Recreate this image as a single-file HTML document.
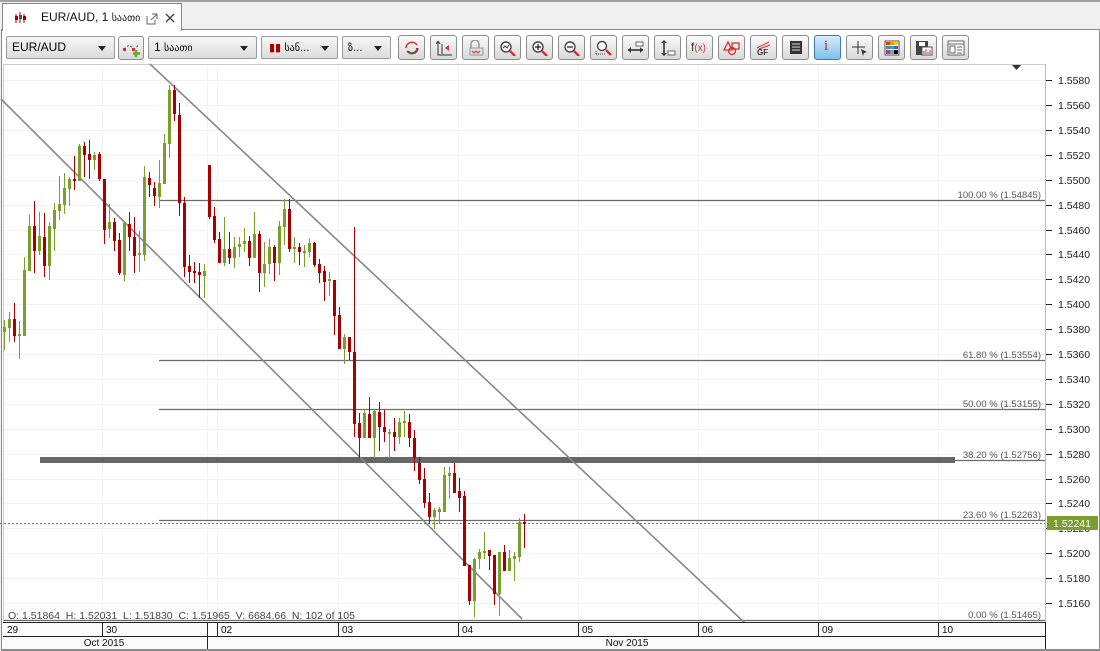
<!DOCTYPE html>
<html><head><meta charset="utf-8"><style>
*{margin:0;padding:0;box-sizing:border-box}
body{width:1100px;height:651px;background:#f0f0f0;font-family:"Liberation Sans","DejaVu Sans",sans-serif;position:relative;overflow:hidden}
.frame{position:absolute;left:1px;top:29px;width:1099px;height:622px;background:#fff;border:1px solid #8a8a8a;border-bottom:2px solid #8a8a8a}
.topline{position:absolute;left:0;top:0;width:1100px;height:2px;background:#a0a0a0}
.tab{position:absolute;left:2px;top:3px;width:180px;height:28px;background:#fff;border:1px solid #8a8a8a;border-bottom:none;font-size:12px;color:#111}
.dd{position:absolute;top:36px;height:23px;border:1px solid #9a9a9a;border-radius:2px;background:linear-gradient(#f6f6f6,#dcdcdc);font-size:12px;line-height:21px;padding-left:5px;color:#000}
.dd:after{content:"";position:absolute;right:8px;top:9px;border-left:4px solid transparent;border-right:4px solid transparent;border-top:5px solid #222}
.btn{position:absolute;top:35px;width:27px;height:25px;border:1px solid #8e8e8e;border-radius:3px;background:linear-gradient(#fafafa,#d8d8d8)}
.btn svg{position:absolute;left:4px;top:4px}
.blue{background:linear-gradient(#d8ecfa,#7cc0ec);border-color:#3a7db0}
</style></head><body>
<div class="topline"></div>
<div class="frame"></div>
<div class="tab">
<svg style="position:absolute;left:11px;top:8px" width="14" height="12"><path d="M2 2v9M6 0v11M10 2v9" stroke="#a00" stroke-width="1"/><rect x="1" y="4" width="3" height="4" fill="#a00"/><rect x="9" y="4" width="3" height="4" fill="#a00"/><rect x="5" y="3" width="3" height="4" fill="#555"/></svg>
<span style="position:absolute;left:38px;top:6px">EUR/AUD, 1 <span style="font-family:'DejaVu Sans',sans-serif;font-size:10px">საათი</span></span>
<svg style="position:absolute;left:143px;top:9px" width="12" height="12"><path d="M1 3v8h8V7M6 1h5v5M11 1L5 7" stroke="#666" fill="none"/></svg>
<svg style="position:absolute;left:162px;top:9px" width="10" height="10"><path d="M1 1l8 8M9 1l-8 8" stroke="#444" stroke-width="1.4"/></svg>
</div>
<div class="dd" style="left:6px;width:109px">EUR/AUD</div>
<div class="btn" style="left:118px;top:36px;width:26px;height:24px"><svg width="18" height="16"><path d="M1 8l5-4 5 4 5-4" stroke="#555" fill="none" stroke-dasharray="2 2"/><rect x="0" y="7" width="3" height="3" fill="#c33"/><rect x="9" y="7" width="3" height="3" fill="#c33"/><path d="M13 9v7M10 12.5h7" stroke="#6a2" stroke-width="2.5"/></svg></div>
<div class="dd" style="left:148px;width:109px">1 <span style="font-family:'DejaVu Sans',sans-serif;font-size:10px">საათი</span></div>
<div class="dd" style="left:261px;width:77px;padding-left:7px"><span style="color:#a00;font-size:11px">▮▮</span> <span style="font-family:'DejaVu Sans',sans-serif;font-size:10px">სან...</span></div>
<div class="dd" style="left:342px;width:49px"><span style="font-family:'DejaVu Sans',sans-serif;font-size:10px">ზ...</span></div>
<div class="btn" style="left:398px"><svg width="18" height="16"><path d="M3 8a6 6 0 0 1 11-3M15 8a6 6 0 0 1-11 3" stroke="#c33" stroke-width="1.6" fill="none"/><path d="M14 8a5 5 0 0 1-9 3" stroke="#555" stroke-width="1.6" fill="none"/></svg></div>
<div class="btn" style="left:430px"><svg width="18" height="16"><path d="M3 1v14h14M3 1l-2 3M3 1l2 3M7 4v10" stroke="#333" fill="none"/><path d="M14 5l-4 3 4 3z" fill="#c33"/></svg></div>
<div class="btn" style="left:462px"><svg width="18" height="16"><path d="M4 8V4a4 4 0 0 1 8 0v4" stroke="#999" fill="none" stroke-width="1.5"/><rect x="3" y="8" width="13" height="7" fill="#ddd" stroke="#999"/><path d="M5 11l2 2 2-2 2 2 2-2" stroke="#c33" fill="none"/></svg></div>
<div class="btn" style="left:494px"><svg width="18" height="16"><circle cx="7" cy="7" r="5" stroke="#444" fill="#fff" stroke-width="1.4"/><path d="M4 8l2-2 2 2 2-3" stroke="#333" fill="none"/><path d="M11 11l5 5" stroke="#c33" stroke-width="2.4"/></svg></div>
<div class="btn" style="left:526px"><svg width="18" height="16"><circle cx="7" cy="7" r="5" stroke="#444" fill="#fff" stroke-width="1.4"/><path d="M4 7h6M7 4v6" stroke="#333" stroke-width="1.4"/><path d="M11 11l5 5" stroke="#c33" stroke-width="2.4"/></svg></div>
<div class="btn" style="left:558px"><svg width="18" height="16"><circle cx="7" cy="7" r="5" stroke="#444" fill="#fff" stroke-width="1.4"/><path d="M4 7h6" stroke="#333" stroke-width="1.4"/><path d="M11 11l5 5" stroke="#c33" stroke-width="2.4"/></svg></div>
<div class="btn" style="left:590px"><svg width="18" height="16"><circle cx="7" cy="6" r="4.5" stroke="#444" fill="#fff" stroke-width="1.4"/><path d="M1 14h9M1 11v4" stroke="#444" stroke-dasharray="1 1"/><path d="M11 10l5 5" stroke="#c33" stroke-width="2.4"/></svg></div>
<div class="btn" style="left:622px"><svg width="18" height="16"><rect x="9" y="2" width="7" height="4" fill="#fff" stroke="#666"/><path d="M1 10h15" stroke="#333" stroke-width="1.6"/><path d="M1 10l3-3v6zM16 10l-3-3v6z" fill="#333"/></svg></div>
<div class="btn" style="left:654px"><svg width="18" height="16"><rect x="9" y="11" width="7" height="4" fill="#fff" stroke="#666"/><path d="M5 1v14" stroke="#333" stroke-width="1.6"/><path d="M5 0l-3 3h6zM5 16l-3-3h6z" fill="#333"/></svg></div>
<div class="btn" style="left:686px"><span style="position:absolute;left:4px;top:4px;font-size:12px;color:#333">f<span style="color:#c33;font-size:10px">(x)</span></span></div>
<div class="btn" style="left:718px"><svg width="18" height="16"><path d="M5 2l-4 8h8z" stroke="#c33" fill="none" stroke-width="1.3"/><rect x="9" y="3" width="7" height="6" stroke="#c33" fill="none" stroke-width="1.3"/><circle cx="9" cy="11" r="3.5" stroke="#c33" fill="none" stroke-width="1.3"/></svg></div>
<div class="btn" style="left:750px"><svg width="18" height="16"><path d="M2 8l12-6M4 9l11-4" stroke="#c33"/><text x="2" y="15" font-size="8" font-family="Liberation Sans" font-weight="bold" fill="#333">GF</text></svg></div>
<div class="btn" style="left:782px"><svg width="18" height="16"><rect x="3" y="1" width="12" height="13" fill="#333"/><path d="M5 4h8M5 7h8M5 10h8" stroke="#ddd"/></svg></div>
<div class="btn blue" style="left:814px"><span style="position:absolute;left:9px;top:2px;font-size:15px;color:#c22;font-family:'Liberation Serif',serif">i</span></div>
<div class="btn" style="left:846px"><svg width="18" height="16"><path d="M7 1v13M1 7h13" stroke="#333"/><path d="M10 9l6 3-3 1-1 3z" fill="#333"/></svg></div>
<div class="btn" style="left:878px"><svg width="18" height="16"><rect x="2" y="1" width="14" height="14" fill="#fff" stroke="#555"/><rect x="3" y="2" width="4" height="3" fill="#e33"/><rect x="7" y="2" width="4" height="3" fill="#f90"/><rect x="11" y="2" width="4" height="3" fill="#fc0"/><rect x="3" y="6" width="4" height="3" fill="#3a3"/><rect x="7" y="6" width="4" height="3" fill="#39f"/><rect x="11" y="6" width="4" height="3" fill="#36c"/><rect x="3" y="10" width="4" height="4" fill="#a3c"/><rect x="7" y="10" width="4" height="4" fill="#999"/><rect x="11" y="10" width="4" height="4" fill="#000"/></svg></div>
<div class="btn" style="left:910px"><svg width="18" height="16"><rect x="1" y="1" width="12" height="14" fill="#444"/><rect x="4" y="2" width="6" height="4" fill="#fff"/><rect x="7" y="7" width="10" height="8" fill="#fff" stroke="#555"/><path d="M9 14v-3M11 14v-5M13 14v-2M15 14v-4" stroke="#c33"/></svg></div>
<div class="btn" style="left:942px"><svg width="18" height="16"><rect x="1" y="1" width="16" height="14" fill="#fff" stroke="#666"/><path d="M1 4h16" stroke="#666"/><rect x="3" y="6" width="5" height="7" fill="none" stroke="#666"/><path d="M10 7h5M10 10h5M10 13h5" stroke="#666"/></svg></div>

<svg style="position:absolute;left:0;top:0" width="1100" height="651">
<rect x="3" y="64" width="1043" height="585" fill="#fff"/>
<path d="M3 64.5H1046M3.5 64V622" stroke="#ccc"/>
<g stroke="#f2f2f2" stroke-width="1">
<path d="M102.5 66V622M207.5 66V622M217.5 66V622M338.5 66V622M458.5 66V622M578.5 66V622M698.5 66V622M818.5 66V622M938.5 66V622"/>
<path d="M4 80.5H1045M4 105.5H1045M4 130.5H1045M4 155.5H1045M4 180.5H1045M4 205.5H1045M4 230.5H1045M4 254.5H1045M4 279.5H1045M4 304.5H1045M4 329.5H1045M4 354.5H1045M4 379.5H1045M4 404.5H1045M4 429.5H1045M4 454.5H1045M4 479.5H1045M4 503.5H1045M4 528.5H1045M4 553.5H1045M4 578.5H1045M4 603.5H1045"/>
</g>
<g stroke="#6b6b6b" stroke-width="1.2">
<path d="M159 200.5H1045M159 360.5H1045M159 409.5H1045M159 460.5H1045M159 520.5H1045M4 620.5H1045"/>
</g>
<rect x="40" y="457" width="915" height="6" fill="#666"/>
<path d="M0 523.5H1045" stroke="#777" stroke-dasharray="2 2"/>
<path d="M150 64L746 624M1 99L522 619" stroke="#888" stroke-width="1.6"/>
<path d="M1012 65h9l-4.5 5z" fill="#333"/>
<g fill="#7a9f2a" stroke="#7a9f2a">
<path stroke-width="1" fill="none" d="M4.5 320V350M9.5 312V342M19.5 321V359M24.5 257V336M29.5 215V271M39.5 212V255M49.5 223V280M54.5 203V251M59.5 176V220M64.5 173V214M69.5 177V206M79.5 144V181M94.5 152V170M109.5 204V238M124.5 221V281M139.5 231V272M144.5 166V261M159.5 160V208M164.5 134V184M169.5 85V158M204.5 264V298M224.5 217V266M234.5 237V268M239.5 237V257M244.5 228V252M254.5 212V258M264.5 242V287M269.5 239V274M279.5 221V275M284.5 199V245M294.5 237V263M304.5 245V267M309.5 239V257M329.5 272V296M344.5 334V364M364.5 409V438M374.5 409V458M389.5 429V458M399.5 418V444M404.5 411V437M434.5 508V529M439.5 507V524M444.5 467V512M449.5 467V499M474.5 558V617M479.5 549V569M484.5 532V559M499.5 552V616M509.5 550V571M514.5 552V581M519.5 518V562"/>
<path stroke="none" d="M3 327h3v5h-3zM8 319h3v9h-3zM18 334h3v2h-3zM23 270h3v66h-3zM28 226h3v45h-3zM38 236h3v15h-3zM48 226h3v40h-3zM53 210h3v19h-3zM58 204h3v7h-3zM63 188h3v17h-3zM68 179h3v10h-3zM78 146h3v35h-3zM93 155h3v5h-3zM108 222h3v7h-3zM123 223h3v52h-3zM138 253h3v2h-3zM143 177h3v78h-3zM158 183h3v14h-3zM163 143h3v41h-3zM168 90h3v54h-3zM203 271h3v5h-3zM223 249h3v14h-3zM233 247h3v11h-3zM238 244h3v3h-3zM243 241h3v3h-3zM253 234h3v24h-3zM263 264h3v9h-3zM268 247h3v17h-3zM278 226h3v37h-3zM283 209h3v18h-3zM293 247h3v2h-3zM303 251h3v2h-3zM308 243h3v9h-3zM328 279h3v2h-3zM343 337h3v12h-3zM363 413h3v25h-3zM373 411h3v27h-3zM388 432h3v2h-3zM398 422h3v15h-3zM403 421h3v2h-3zM433 510h3v7h-3zM438 509h3v3h-3zM443 475h3v37h-3zM448 473h3v3h-3zM473 559h3v42h-3zM478 552h3v7h-3zM483 551h3v2h-3zM498 552h3v42h-3zM508 558h3v13h-3zM513 556h3v3h-3zM518 522h3v35h-3z"/>
</g>
<g fill="#a80000" stroke="#a80000">
<path stroke-width="1" fill="none" d="M14.5 303V342M34.5 201V273M44.5 213V277M74.5 156V190M84.5 142V177M89.5 140V179M99.5 152V181M104.5 179V244M114.5 218V251M119.5 233V275M129.5 212V251M134.5 217V273M149.5 172V197M154.5 182V206M174.5 85V121M179.5 103V216M184.5 197V277M189.5 255V283M194.5 262V283M199.5 263V298M209.5 165V219M214.5 207V243M219.5 232V263M229.5 232V264M249.5 236V266M259.5 231V292M274.5 245V281M289.5 199V252M299.5 243V265M314.5 242V267M319.5 259V283M324.5 266V301M334.5 280V335M339.5 307V349M349.5 337V360M354.5 227V437M359.5 413V458M369.5 397V438M379.5 402V451M384.5 410V442M394.5 418V451M409.5 414V447M414.5 430V471M419.5 457V484M424.5 468V508M429.5 493V524M454.5 463V493M459.5 478V512M464.5 491V566M469.5 565V605M489.5 550V570M494.5 555V605M504.5 545V571M524.5 514V548"/>
<path stroke="none" d="M13 319h3v17h-3zM33 226h3v25h-3zM43 237h3v29h-3zM73 179h3v2h-3zM83 146h3v9h-3zM88 154h3v6h-3zM98 154h3v25h-3zM103 179h3v51h-3zM113 222h3v19h-3zM118 240h3v33h-3zM128 224h3v13h-3zM133 237h3v19h-3zM148 178h3v7h-3zM153 188h3v8h-3zM173 90h3v24h-3zM178 115h3v88h-3zM183 203h3v64h-3zM188 266h3v6h-3zM193 271h3v2h-3zM198 272h3v3h-3zM208 165h3v52h-3zM213 216h3v24h-3zM218 239h3v24h-3zM228 249h3v9h-3zM248 241h3v17h-3zM258 234h3v39h-3zM273 247h3v16h-3zM288 209h3v40h-3zM298 247h3v5h-3zM313 243h3v22h-3zM318 264h3v9h-3zM323 271h3v11h-3zM333 280h3v36h-3zM338 315h3v34h-3zM348 337h3v15h-3zM353 352h3v72h-3zM358 423h3v15h-3zM368 414h3v24h-3zM378 412h3v15h-3zM383 427h3v5h-3zM393 432h3v5h-3zM408 422h3v16h-3zM413 438h3v20h-3zM418 463h3v17h-3zM423 479h3v24h-3zM428 502h3v15h-3zM453 473h3v20h-3zM458 491h3v7h-3zM463 496h3v70h-3zM468 565h3v36h-3zM488 550h3v6h-3zM493 555h3v39h-3zM503 552h3v19h-3zM523 522h3v2h-3z"/>
</g>
<g font-family="Liberation Sans" font-size="9.5" fill="#555" text-anchor="end">
<text x="1041" y="198">100.00 % (1.54845)</text>
<text x="1041" y="358">61.80 % (1.53554)</text>
<text x="1041" y="407">50.00 % (1.53155)</text>
<text x="1041" y="458">38.20 % (1.52756)</text>
<text x="1041" y="518">23.60 % (1.52263)</text>
<text x="1041" y="618">0.00 % (1.51465)</text>
</g>
<text x="8" y="619" font-family="Liberation Sans" font-size="10.5" fill="#444" xml:space="preserve">O: 1.51864  H: 1.52031  L: 1.51830  C: 1.51965  V: 6684.66  N: 102 of 105</text>
<path d="M1045.5 64V622" stroke="#bbb"/>
<g stroke="#222"><path d="M1046 80.5h6M1046 105.5h6M1046 130.5h6M1046 155.5h6M1046 180.5h6M1046 205.5h6M1046 230.5h6M1046 254.5h6M1046 279.5h6M1046 304.5h6M1046 329.5h6M1046 354.5h6M1046 379.5h6M1046 404.5h6M1046 429.5h6M1046 454.5h6M1046 479.5h6M1046 503.5h6M1046 528.5h6M1046 553.5h6M1046 578.5h6M1046 603.5h6"/></g>
<g font-family="Liberation Sans" font-size="10.5" fill="#222">
<text x="1058" y="84">1.5580</text><text x="1058" y="109">1.5560</text><text x="1058" y="134">1.5540</text><text x="1058" y="159">1.5520</text><text x="1058" y="184">1.5500</text><text x="1058" y="209">1.5480</text><text x="1058" y="234">1.5460</text><text x="1058" y="258">1.5440</text><text x="1058" y="283">1.5420</text><text x="1058" y="308">1.5400</text><text x="1058" y="333">1.5380</text><text x="1058" y="358">1.5360</text><text x="1058" y="383">1.5340</text><text x="1058" y="408">1.5320</text><text x="1058" y="433">1.5300</text><text x="1058" y="458">1.5280</text><text x="1058" y="483">1.5260</text><text x="1058" y="507">1.5240</text><text x="1058" y="532">1.5220</text><text x="1058" y="557">1.5200</text><text x="1058" y="582">1.5180</text><text x="1058" y="607">1.5160</text>
</g>
<rect x="1047" y="516" width="51" height="14" fill="#7b9e2d"/>
<text x="1072" y="527" font-family="Liberation Sans" font-size="10.5" fill="#fff" text-anchor="middle">1.52241</text>
<rect x="3" y="622" width="1043" height="27" fill="#fafafa"/>
<path d="M3 622.5H1046M3 636.5H1046M1045.5 622V649" stroke="#222"/>
<path d="M102.5 622v14M207.5 622v27M217.5 622v14M338.5 622v14M458.5 622v14M578.5 622v14M698.5 622v14M818.5 622v14M938.5 622v14" stroke="#222"/>
<g font-family="Liberation Sans" font-size="10" fill="#111">
<text x="7" y="633">29</text><text x="106" y="633">30</text><text x="221" y="633">02</text><text x="342" y="633">03</text><text x="462" y="633">04</text><text x="582" y="633">05</text><text x="702" y="633">06</text><text x="822" y="633">09</text><text x="942" y="633">10</text>
<text x="104" y="646" text-anchor="middle">Oct 2015</text><text x="627" y="646" text-anchor="middle">Nov 2015</text>
</g>
</svg>
</body></html>
